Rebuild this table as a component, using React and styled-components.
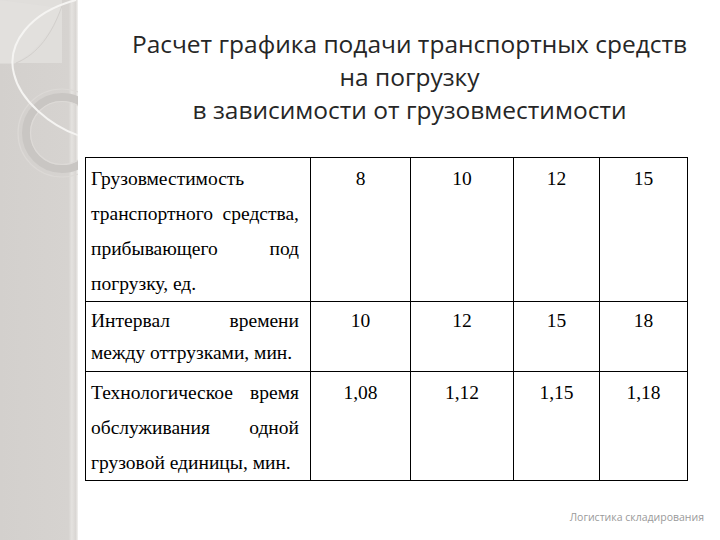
import styled, { createGlobalStyle } from "styled-components";

const Global = createGlobalStyle`
  html, body { margin: 0; padding: 0; background: #fff; }
  #root { width: 720px; height: 540px; overflow: hidden; }
`;

const Slide = styled.div`
  display: flex;
  width: 720px;
  height: 540px;
  background: #fff;
`;

const Sidebar = styled.aside`
  width: 78px;
  flex: none;
  background: linear-gradient(90deg, #d3d0cd 0, #d6d3d0 88%, #e4e2df 92%, #d9d6d3 97%, #f2f1ef 100%);
  overflow: hidden;
  svg { display: block; }
`;

const Main = styled.main`
  flex: 1;
  min-width: 0;
  display: flex;
  flex-direction: column;
  padding: 27px 0 0 7px;
`;

const Title = styled.h1`
  margin: 0 0 0 14px;
  font-family: "Open Sans", "Noto Sans", sans-serif;
  font-weight: 400;
  font-size: 24.5px;
  line-height: 33px;
  color: #262626;
  text-align: center;
  white-space: nowrap;
`;

const Table = styled.table`
  margin-top: 31px;
  width: 602px;
  border-collapse: collapse;
  font-family: "Liberation Serif", "Tinos", "DejaVu Serif", serif;
  font-size: 19.5px;
  color: #000;
  table-layout: fixed;
`;

const Col = styled.col`
  width: ${(p) => p.$w}px;
`;

const Cell = styled.td`
  box-sizing: border-box;
  border: 1px solid #000;
  padding: 3px 11px 0 5px;
  vertical-align: top;
  line-height: ${(p) => p.$lh}px;
  text-align: justify;
  height: ${(p) => p.$h}px;
`;

const Value = styled(Cell)`
  padding: 3px 4px 0;
  text-align: center;
`;

const Footer = styled.div`
  margin-top: auto;
  align-self: flex-end;
  padding: 0 16px 16px 0;
  font-family: "Open Sans", "Noto Sans", sans-serif;
  font-size: 10.5px;
  color: #9a9a9a;
  white-space: nowrap;
`;

const widths = [225, 100, 103, 86, 88];

const rows = [
  {
    label: "Грузовместимость транспортного средства, прибывающего под погрузку, ед.",
    values: ["8", "10", "12", "15"],
    h: 143,
    lh: 35,
  },
  {
    label: "Интервал времени между оттрузками, мин.",
    values: ["10", "12", "15", "18"],
    h: 70,
    lh: 32,
  },
  {
    label: "Технологическое время обслуживания одной грузовой единицы, мин.",
    values: ["1,08", "1,12", "1,15", "1,18"],
    h: 109,
    lh: 35,
  },
];

function Ornament() {
  return (
    <svg width="78" height="220" viewBox="0 0 78 220">
      <rect x="0" y="0" width="62" height="63" fill="#e0dedb" />
      <path d="M62 8 C 50 34, 36 52, 14 64 L 0 64 L 0 0 Z" fill="#e4e2df" opacity="0.5" />
      <path d="M62 6 C 52 34, 38 54, 16 63" fill="none" stroke="#d2cfcc" strokeWidth="1" />
      <circle cx="62" cy="133" r="44" fill="none" stroke="#dcd9d6" strokeWidth="1.2" />
      <circle cx="62" cy="133" r="36" fill="none" stroke="#c9c6c3" strokeWidth="8" />
      <circle cx="62" cy="133" r="31.5" fill="none" stroke="#dddad7" strokeWidth="1.2" />
      <path d="M76 0 C 30 12, 6 44, 14 74 C 20 100, 50 126, 80 136" fill="none" stroke="#f5f4f2" strokeWidth="2" />
    </svg>
  );
}

export default function App() {
  return (
    <Slide>
      <Global />
      <Sidebar>
        <Ornament />
      </Sidebar>
      <Main>
        <Title>
          Расчет графика подачи транспортных средств
          <br />
          на погрузку
          <br />в зависимости от грузовместимости
        </Title>
        <Table>
          <colgroup>
            {widths.map((w, i) => (
              <Col key={i} $w={w} />
            ))}
          </colgroup>
          <tbody>
            {rows.map((r) => (
              <tr key={r.label}>
                <Cell $h={r.h} $lh={r.lh}>
                  {r.label}
                </Cell>
                {r.values.map((v, i) => (
                  <Value key={i} $h={r.h} $lh={r.lh}>
                    {v}
                  </Value>
                ))}
              </tr>
            ))}
          </tbody>
        </Table>
        <Footer>Логистика складирования</Footer>
      </Main>
    </Slide>
  );
}
